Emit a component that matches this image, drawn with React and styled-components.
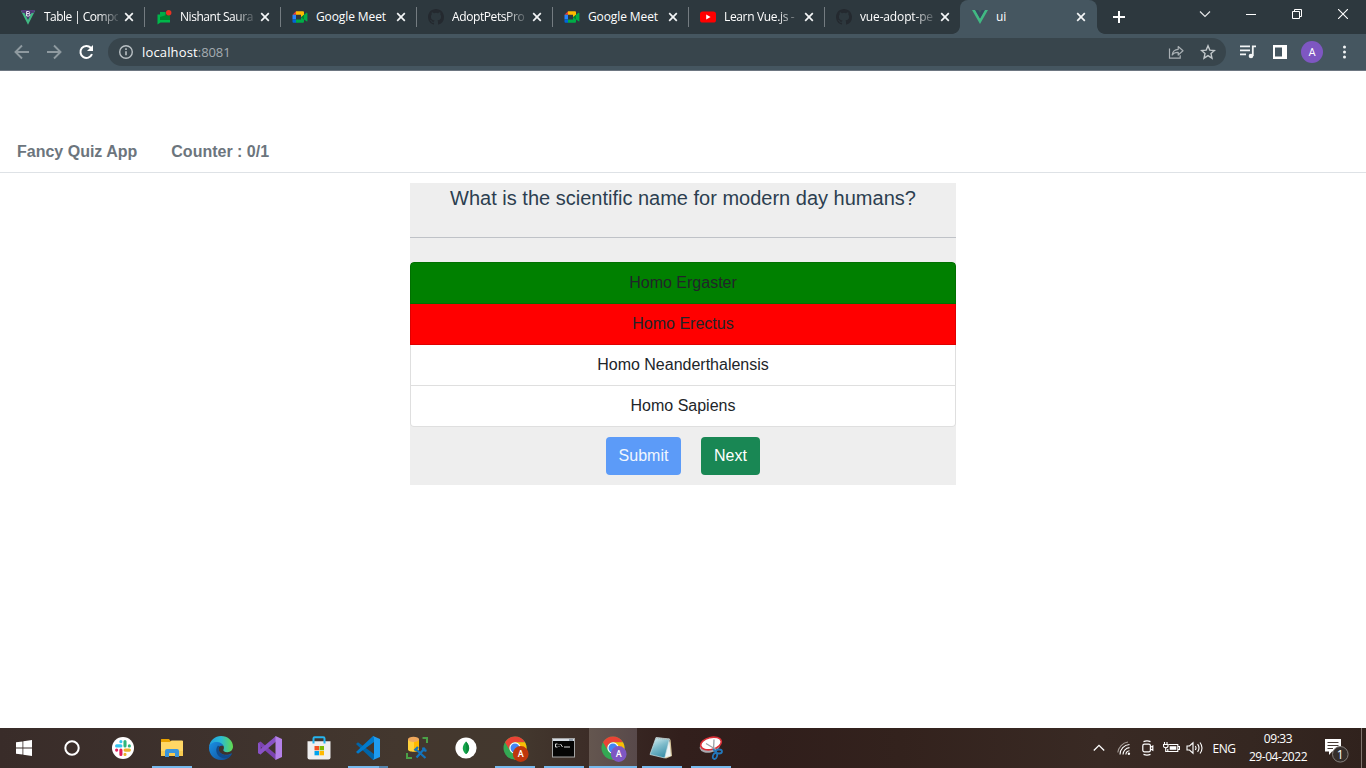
import React from 'react';
import styled, { createGlobalStyle, css } from 'styled-components';

const GlobalStyle = createGlobalStyle`
  *, *::before, *::after { box-sizing: border-box; }
  html, body { margin: 0; padding: 0; background: #fff; overflow: hidden; }
  svg { display: block; flex: none; }
`;

const uiFont = css`font-family: "Open Sans", "Noto Sans", sans-serif;`;

const Screen = styled.div`
  display: flex;
  flex-direction: column;
  width: 1366px;
  height: 768px;
  overflow: hidden;
`;

/* ---------- Browser chrome ---------- */

const TabStrip = styled.div`
  ${uiFont}
  display: flex;
  flex: none;
  height: 34px;
  padding-left: 8px;
  background: #2d383e;
`;

const Tab = styled.div`
  position: relative;
  display: flex;
  align-items: center;
  width: ${p => (p.$active ? 137 : 136)}px;
  height: 34px;
  padding-left: 12px;
  color: #fff;
  background: ${p => (p.$active ? '#455660' : 'transparent')};
  border-radius: 8px 8px 0 0;
  ${p => p.$divider && css`
    &::after {
      content: '';
      position: absolute;
      right: -1px;
      top: 7px;
      width: 1px;
      height: 20px;
      background: #747c81;
    }
  `}
  ${p => p.$active && css`
    &::before, &::after {
      content: '';
      position: absolute;
      bottom: 0;
      width: 8px;
      height: 8px;
    }
    &::before { left: -8px; background: radial-gradient(circle at 0 0, transparent 7.5px, #455660 8.2px); }
    &::after { right: -8px; background: radial-gradient(circle at 100% 0, transparent 7.5px, #455660 8.2px); }
  `}
`;

const TabTitle = styled.div`
  width: 74px;
  margin: 0 6px 0 8px;
  white-space: nowrap;
  font-size: 12px;
  line-height: 18px;
  font-weight: 500;
  letter-spacing: ${p => p.$spacing || 0}px;
  ${p => p.$fade && css`mask-image: linear-gradient(90deg, #000 72%, rgba(0, 0, 0, 0.15) 100%);`}
`;

const NewTab = styled.div`
  display: flex;
  align-items: center;
  width: 44px;
  padding-left: 16px;
`;

const WindowControls = styled.div`
  display: flex;
  margin-left: auto;
`;

const WindowButton = styled.div`
  display: flex;
  justify-content: center;
  align-items: center;
  width: 46px;
  height: 28px;
`;

const Toolbar = styled.div`
  ${uiFont}
  display: flex;
  flex: none;
  align-items: center;
  height: 37px;
  padding: 0 0 1px 12px;
  background: #455660;
  border-bottom: 1px solid #6d7681;
`;

const NavButton = styled.div`
  display: flex;
  flex: none;
  justify-content: center;
  width: 20px;
  margin-right: 12px;
`;

const Omnibox = styled.div`
  display: flex;
  flex: none;
  align-items: center;
  width: 1118px;
  height: 28px;
  padding: 0 10px;
  border-radius: 14px;
  background: #38454c;
`;

const Url = styled.div`
  flex: 1;
  margin-left: 8px;
  color: #fff;
  font-size: 13px;
  line-height: 20px;
  letter-spacing: 0.15px;
`;

const Port = styled.span`color: #a5acb1; letter-spacing: -0.1px;`;

const OmniActions = styled.div`display: flex; gap: 16px; align-items: center;`;

const ToolActions = styled.div`
  display: flex;
  flex: none;
  align-items: center;
  margin-left: 6px;
`;

const ToolSlot = styled.div`
  display: flex;
  flex: none;
  justify-content: center;
  width: 32px;
`;

const Avatar = styled.div`
  width: 22px;
  height: 22px;
  border-radius: 50%;
  background: #7e57c2;
  color: #fff;
  font: 11px/23px Roboto, sans-serif;
  text-align: center;
`;

/* ---------- Quiz page ---------- */

const Page = styled.main`
  flex: 1;
  padding-top: 60px;
  background: #fff;
  font-family: "Liberation Sans", Arial, sans-serif;
  font-size: 16px;
  line-height: 24px;
`;

const Nav = styled.nav`
  display: flex;
  gap: 34px;
  height: 42px;
  padding: 9px 17px 8px;
  border-bottom: 1px solid #dee2e6;
  color: #6c757d;
  font-weight: 700;
`;

const QuizCard = styled.section`
  width: 546px;
  height: 302px;
  margin: 10px auto 0;
  background: #eee;
  text-align: center;
`;

const Question = styled.h1`
  height: 55px;
  margin: 0 0 24px;
  padding-top: 3px;
  border-bottom: 1px solid #bfc2c7;
  color: #2c3e50;
  font-size: 20px;
  font-weight: 400;
  line-height: 24px;
`;

const Answers = styled.div`
  overflow: hidden;
  border-radius: 4px;
`;

const Answer = styled.div`
  padding: 8px 16px;
  color: #212529;
  background: ${p => p.$bg || '#fff'};
  border: 1px solid rgba(0, 0, 0, 0.125);
  border-top-width: 0;
  &:first-child { border-top-width: 1px; border-radius: 4px 4px 0 0; }
  &:last-child { border-radius: 0 0 4px 4px; }
`;

const Actions = styled.div`
  display: flex;
  justify-content: center;
  gap: 20px;
  padding-top: 10px;
`;

const Button = styled.button`
  width: ${p => p.$w}px;
  height: 38px;
  padding: 0;
  border: 0;
  border-radius: 4px;
  background: ${p => p.$bg};
  color: ${p => p.$color || '#fff'};
  font: 16px/24px "Liberation Sans", Arial, sans-serif;
`;

/* ---------- Taskbar ---------- */

const Taskbar = styled.div`
  ${uiFont}
  display: flex;
  flex: none;
  height: 40px;
  background: linear-gradient(90deg, #392c29 0, #3e322d 220px, #43372e 400px, #43382e 520px, #3b2b26 600px, #321f1c 680px, #301e1b 760px, #33221d 900px, #392a24 1100px, #352721 1250px, #30221d 1366px);
`;

const Slot = styled.div`
  position: relative;
  display: flex;
  flex: none;
  align-items: center;
  justify-content: center;
  width: ${p => p.$w || 49}px;
  height: 40px;
  padding: ${p => p.$pad || 0};
  ${p => p.$active && css`background: linear-gradient(90deg, #64564f, #58494a) 0 0 / 48px 100% no-repeat;`}
  ${p => p.$running && css`
    &::after {
      content: '';
      position: absolute;
      bottom: 0;
      left: ${p.$active ? 0 : 4}px;
      right: ${p.$active ? 1 : 5}px;
      height: 2px;
      background: ${p.$stacked ? 'linear-gradient(90deg, #76b9ed 31px, #5485ad 31px)' : '#76b9ed'};
    }
  `}
`;

const Apps = styled.div`display: flex; margin-left: 3px;`;

const Tray = styled.div`
  display: flex;
  margin-left: auto;
  align-items: center;
  color: #fff;
`;

const Lang = styled.div`
  width: 32px;
  padding-left: 2px;
  text-align: center;
  font-size: 12px;
  letter-spacing: -0.4px;
`;

const Clock = styled.div`
  width: 78px;
  text-align: center;
  font-size: 12px;
  line-height: 18px;
  letter-spacing: -0.45px;
`;

const DesktopEdge = styled.div`
  width: 5px;
  height: 40px;
  border-left: 1px solid #80756f;
`;

/* ---------- Icons ---------- */

const Svg = ({ w = 24, h, vb, children, ...rest }) => (
  <svg width={w} height={h || w} viewBox={vb || `0 0 ${w} ${h || w}`} fill="none" {...rest}>{children}</svg>
);

const CloseIcon = () => (
  <Svg w={10} stroke="#f4f6f7" strokeWidth="1.7"><path d="M1.2 1.2l7.6 7.6M8.8 1.2L1.2 8.8" /></Svg>
);

const VueIcon = () => (
  <Svg w={16}>
    <path d="M0 1h3.2L8 9.5 12.8 1H16L8 15z" fill="#41b883" />
    <path d="M3.2 1h3L8 4.1 9.8 1h3L8 9.5z" fill="#35495e" />
  </Svg>
);

const BootstrapVueIcon = () => (
  <Svg w={16}>
    <path d="M1 2h3l4 8 4-8h3L8 15.8z" fill="#41b883" />
    <path d="M.8 1h14.400l-1.500 3H2.300z" fill="#563d7c" />
    <path d="M3.500 2h9L8 11z" fill="#4b3670" />
    <path d="M6.600 2.500h1.900a1 1 0 010 2.100H6.600zM6.600 4.600h2.200a1.200 1.200 0 010 2.400H6.600z" stroke="#eee8f6" strokeWidth="1" />
  </Svg>
);

const ChatIcon = () => (
  <Svg w={16}>
    <path d="M4 3h5.500v3.200H14V11H4z" fill="#00832d" />
    <path d="M1.500 5.500H4V11h10v2.500H4.500l-3 2z" fill="#00b74a" />
    <path d="M4 3h5.500v3.200L4 8z" fill="#00ac47" />
    <circle cx="12.700" cy="3.700" r="2.700" fill="#ea3323" />
  </Svg>
);

const MeetIcon = () => (
  <Svg w={16}>
    <path d="M.5 5.8L4 2.3v3.5z" fill="#ea4335" />
    <path d="M.5 5.8H4v4.6H.5z" fill="#2684fc" />
    <path d="M.5 10.4H4v3.4H1.6a1.1 1.1 0 01-1.1-1.1z" fill="#0066da" />
    <path d="M4 2.3h7a1 1 0 011 1v3L9 8.4V5.8H4z" fill="#ffba00" />
    <path d="M4 10.4h5V7.9l3 2.4v2.5a1 1 0 01-1 1H4z" fill="#00ac47" />
    <path d="M9 8.2l5.5-4.4c.4-.3.9 0 .9.5v7.6c0 .5-.5.7-.9.4z" fill="#00ac47" />
    <path d="M9 8.2L12 5.8v4.7z" fill="#00832d" />
  </Svg>
);

const GithubIcon = () => (
  <Svg w={16} vb="0 0 16 16">
    <path fill="#24292f" d="M8 0C3.58 0 0 3.58 0 8c0 3.54 2.29 6.53 5.47 7.59.4.07.55-.17.55-.38 0-.19-.01-.82-.01-1.49-2.01.37-2.53-.49-2.69-.94-.09-.23-.48-.94-.82-1.13-.28-.15-.68-.52-.01-.53.63-.01 1.08.58 1.23.82.72 1.21 1.87.87 2.33.66.07-.52.28-.87.51-1.07-1.78-.2-3.64-.89-3.64-3.95 0-.87.31-1.59.82-2.15-.08-.2-.36-1.02.08-2.12 0 0 .67-.21 2.2.82a7.5 7.5 0 014 0c1.53-1.04 2.2-.82 2.2-.82.44 1.1.16 1.92.08 2.12.51.56.82 1.27.82 2.15 0 3.07-1.87 3.75-3.65 3.95.29.25.54.73.54 1.48 0 1.07-.01 1.93-.01 2.2 0 .21.15.46.55.38A8 8 0 0016 8c0-4.42-3.58-8-8-8z" />
  </Svg>
);

const YoutubeIcon = () => (
  <Svg w={16}><rect y="2.4" width="16" height="11.2" rx="2.7" fill="#f00" /><path d="M6.2 5.5v5L10.6 8z" fill="#fff" /></Svg>
);

const BackIcon = ({ flip }) => (
  <Svg w={16} stroke="#8f9aa0" strokeWidth="1.9"><path d={flip ? 'M1 8h13M8 1.5L14.5 8 8 14.5' : 'M15 8H2M8 1.5L1.5 8 8 14.5'} /></Svg>
);

const ReloadIcon = () => (
  <Svg w={16} stroke="#fff" strokeWidth="2"><path d="M14 10.2A6 6 0 1112.800 3.800L14 5" /><path d="M15 1v6H9z" fill="#fff" stroke="none" /></Svg>
);

const InfoIcon = () => (
  <Svg w={16} stroke="#b9c0c4" strokeWidth="1.4"><circle cx="8" cy="8" r="6.3" /><path d="M8 7.2v4M8 4.3v1.6" strokeWidth="1.6" /></Svg>
);

const ShareIcon = () => (
  <Svg w={16} stroke="#a9b0b4" strokeWidth="1.2">
    <path d="M1.5 4.5v9.7h10.7v-3" />
    <path d="M4.2 11c.5-4 2.8-5.6 6-5.7V2.5L15 6.8l-4.8 4.2V8.3C7.5 8.2 5.5 9 4.2 11z" strokeLinejoin="round" />
  </Svg>
);

const StarIcon = () => (
  <Svg w={16} stroke="#c2c8cb" strokeWidth="1.4"><path d="M8 1.8l1.8 4.3 4.7.4-3.5 3.1 1 4.6-4-2.5-4 2.5 1-4.6L1.5 6.5l4.700-.4z" /></Svg>
);

const MusicIcon = () => (
  <Svg w={16} stroke="#f3f5f6" strokeWidth="1.8">
    <path d="M0 2.4h10M0 6.4h10M0 10.4h6M12.8 12V2.4H16" />
    <circle cx="11" cy="12" r="2.3" fill="#f3f5f6" stroke="none" />
  </Svg>
);

const PanelIcon = () => (
  <Svg w={14}><path d="M0 0h14v14H0zM2 2.5v9h7v-9z" fill="#fff" fillRule="evenodd" /></Svg>
);

const DotsIcon = () => (
  <Svg w={4} h={14}><g fill="#f3f5f6"><circle cx="2.5" cy="2" r="1.5" /><circle cx="2.5" cy="7" r="1.5" /><circle cx="2.5" cy="12" r="1.5" /></g></Svg>
);

const WindowsIcon = () => (
  <Svg w={16}><path fill="#fff" d="M0 2.3L6.5 1.4v6.2H0zM7.3 1.3L16 0v7.6H7.3zM0 8.4h6.5v6.2L0 13.7zM7.3 8.4H16V16l-8.7-1.3z" /></Svg>
);

const SlackIcon = () => (
  <Svg w={22}>
    <circle cx="11" cy="11" r="11" fill="#fff" />
    <g strokeWidth="3.1" strokeLinecap="round">
      <path d="M4.600 8.900h4.300M8.900 4.600v.2" stroke="#36c5f0" />
      <path d="M13 4.600v4.300M17.300 8.900h.1" stroke="#2eb67d" />
      <path d="M13.100 13.100h4.300M13 17.300v.1" stroke="#ecb22e" />
      <path d="M8.900 13.100v4.300M4.600 13.100h.1" stroke="#e01e5a" />
    </g>
  </Svg>
);

const FolderIcon = () => (
  <Svg w={22} h={20}>
    <path d="M0 1.5Q0 1 .5 1h7.500l1.500 2H22v4H0z" fill="#e9a200" />
    <path d="M0 4h9l1.500-1.500H21q1 0 1 1V18H0z" fill="#ffd765" />
    <path d="M0 13h22v5H0z" fill="#f8cb50" />
    <path d="M4 19v-6q0-2 2-2h10q2 0 2 2v6h-4v-4H8v4z" fill="#3a96dd" />
  </Svg>
);

const EdgeIcon = () => (
  <Svg w={24}>
    <defs>
      <linearGradient id="edgeTop" x1="0" y1="8" x2="24" y2="8" gradientUnits="userSpaceOnUse"><stop stopColor="#229ee0" /><stop offset=".5" stopColor="#2abbd5" /><stop offset="1" stopColor="#63db4d" /></linearGradient>
      <linearGradient id="edgeLow" x1="2" y1="8" x2="18" y2="23" gradientUnits="userSpaceOnUse"><stop stopColor="#1989dc" /><stop offset="1" stopColor="#11529c" /></linearGradient>
    </defs>
    <path d="M0 11C1 4 6 0 12 0c7 0 12 5 12 10.500 0 3.500-2.500 5.700-5.700 5.700-3 0-4.500-1.300-3.900-2.400 1.300-2.200.4-5.800-3.900-6.300C5 6.900 1.500 8 0 11z" fill="url(#edgeTop)" />
    <path d="M0 12c0-4 4-6.500 8.600-6 3.300.3 5.300 2.300 5.700 4-5.500-1.500-6.300 4.500-2.400 7.200 3.400 2.400 7.400 1.800 10.100.2.700-.4 1.100.1.700.8C20.600 21.800 16.800 24 12 24 5.200 24 0 18.500 0 12z" fill="url(#edgeLow)" />
    <path d="M8.800 9.700C5.400 14 7.900 21 14.500 22.300c3.300.4 6.300-1.100 7.900-3.600-3.600 1.300-8 .8-10.900-1.700-2.300-2-2.500-5.100-.8-7z" fill="#114a8b" />
  </Svg>
);

const VisualStudioIcon = () => (
  <Svg w={24}>
    <path d="M0 7l2.500-1.500L18 18.500V24L3 11v4l-.5 3.500L0 17z" fill="#7b43b1" />
    <path d="M0 17l2.500 1.500L18 5.500V0L2 13.500V8L0 7z" fill="#8952c5" />
    <path d="M17.500 0L24 3v18l-6.500 3z" fill="#b481e8" />
  </Svg>
);

const StoreIcon = () => (
  <Svg w={24}>
    <path d="M.5 5.300h23v16.200q0 2-2 2h-19q-2 0-2-2z" fill="#efefef" />
    <path d="M6.500 7.500V2.500q0-1.200 1.200-1.200h8.600q1.200 0 1.200 1.200v5" stroke="#26b5ef" strokeWidth="2" />
    <path d="M7.500 10H12v4.300H7.500z" fill="#f25022" /><path d="M12.500 10H17v4.300h-4.500z" fill="#7fba00" />
    <path d="M7.500 15H12v4.300H7.500z" fill="#00a4ef" /><path d="M12.500 15H17v4.300h-4.500z" fill="#ffb900" />
  </Svg>
);

const CodeIcon = () => (
  <Svg w={24}>
    <path d="M0 8l2-1.800L18 18v5.500L17 24z" fill="#0065a9" />
    <path d="M0 16l2 1.800L18 6V.5L17 0z" fill="#007acc" />
    <path d="M17 0l7 3v18l-7 3 1-2V2z" fill="#1f9cf0" />
  </Svg>
);

const DatabaseIcon = () => (
  <Svg w={24}>
    <path d="M3 3.300v10.200c0 3 11 3 11 0V3.300z" fill="#ffd23c" />
    <path d="M9 5.500v10c3-.1 5-.8 5-2V3.300z" fill="#ffb900" />
    <ellipse cx="8.500" cy="3.300" rx="5.500" ry="2.600" fill="#efa75c" />
    <path d="M17.500 2H22v5M2 17v5h5" stroke="#4ba047" strokeWidth="2" />
    <path d="M10.500 13l10 9M20 12l-8.500 9.500" stroke="#1474bd" strokeWidth="2.200" />
    <path d="M9.500 14.500l3.500-3.500M18 11.500l.8 2.500 2.700.8" stroke="#1474bd" strokeWidth="2.400" />
  </Svg>
);

const MongoIcon = () => (
  <Svg w={22}>
    <circle cx="11" cy="11" r="10.600" fill="#fff" />
    <path d="M11 4.500c4.500 5 3.800 9 .3 12.500h-.6C7 13.500 6.500 9.500 11 4.500z" fill="#13a54b" />
    <path d="M11 4.500c4.500 5 3.800 9 .3 12.500z" fill="#0c8a3c" />
  </Svg>
);

const ChromeIcon = ({ badge }) => (
  <Svg w={26} h={26}>
    <circle cx="12" cy="12" r="11.500" fill="#34a853" />
    <path d="M12 .5a11.500 11.500 0 0110 5.800H12a5.700 5.700 0 00-5 8.500L2 6.300A11.500 11.500 0 0112 .5z" fill="#ea4335" />
    <path d="M12 6.300h10a11.500 11.500 0 01-10.600 17.200L17 14.800z" fill="#fbbc05" />
    <circle cx="12" cy="12" r="5.700" fill="#fff" /><circle cx="12" cy="12" r="4.500" fill="#4285f4" />
    <circle cx="17.700" cy="18" r="7.900" fill={badge} />
    <text x="17.700" y="21.200" textAnchor="middle" fill="#fff" fontFamily="Roboto, sans-serif" fontSize="9" fontWeight="500">A</text>
  </Svg>
);

const TerminalIcon = () => (
  <Svg w={24} h={20}>
    <rect x=".5" y=".5" width="22" height="18.500" fill="#050505" stroke="#a5a5a5" />
    <path d="M1 1h21v2H1z" fill="#d7dce3" /><path d="M17 2h4" stroke="#526477" />
    <path d="M5.500 6H3.500v3h2M7 6.300v.8M7 8.200v.8M8.500 6l2 3M12 9h6" stroke="#d9d9d9" />
  </Svg>
);

const NotepadIcon = () => (
  <Svg w={24}>
    <defs><linearGradient id="note" x1="5" y1="1" x2="15" y2="22" gradientUnits="userSpaceOnUse"><stop stopColor="#d8f0f3" /><stop offset=".45" stopColor="#7fbccb" /><stop offset="1" stopColor="#348ba6" /></linearGradient></defs>
    <path d="M21.500 3L23 20l-6 2.500-3-1z" fill="#d5c49b" />
    <path d="M20 2l1.800 18-6 1.500z" fill="#edf4f5" />
    <path d="M7 1.500L20.500 3l-4.800 19L1 18.500z" fill="url(#note)" stroke="#cbe4e8" strokeWidth=".7" />
    <path d="M7.300 2l13 1.500" stroke="#b3b8b5" strokeWidth="1.600" strokeDasharray="1 1" />
  </Svg>
);

const SnipIcon = () => (
  <Svg w={24}>
    <ellipse cx="11" cy="10" rx="10.500" ry="6.500" transform="rotate(-14 11 10)" fill="#a8a9af" />
    <ellipse cx="12" cy="7.500" rx="10.500" ry="6" transform="rotate(-14 12 7.500)" fill="#fff" stroke="#dc3038" strokeWidth="1.600" />
    <path d="M7 7.500l10 6M15 3.500L14.500 14" stroke="#9ba0a6" strokeWidth="1.300" />
    <g stroke="#2377ba" strokeWidth="1.800"><ellipse cx="20" cy="15.500" rx="3" ry="2" /><ellipse cx="16" cy="20" rx="2" ry="3" transform="rotate(20 16 20)" /><path d="M14 13l3.500 4" /></g>
  </Svg>
);

const WifiIcon = () => (
  <Svg w={16} stroke="#fff" strokeWidth="1.100">
    <path d="M4 14.500A10 10 0 0113.500 4.500M7 14.500A7 7 0 0113.500 7.600M9.900 14.500a4 4 0 013.600-3.800" />
    <path d="M1.800 12.500A12 12 0 0112 2" stroke="#a39a95" /><circle cx="12.900" cy="13.700" r="1.200" fill="#fff" stroke="none" />
  </Svg>
);

const MeetNowIcon = () => (
  <Svg w={14} h={16} stroke="#fff" strokeWidth="1.200">
    <rect x="1.800" y="4.100" width="7.600" height="7.800" rx="1.600" /><path d="M9.600 7.300l2.200-1.300v4.200L9.600 9M2.500 1.600q3.500-1.400 7 0M2.500 14.400q3.500 1.400 7 0" />
  </Svg>
);

const BatteryIcon = () => (
  <Svg w={17} h={14} stroke="#fff" strokeWidth="1.100">
    <path d="M5.500 3.500h9.300v7H4.800V8M15 5.500h1.500v3H15M2.700 6.500V10.500H5M1.500 1V3.500M4 1V3.500" /><path d="M.5 3.500h4.500V5Q5 6.700 2.700 6.700.5 6.700.5 5z" /><path d="M6.700 5.200h6.600v3.600H6.700z" fill="#fff" stroke="none" />
  </Svg>
);

const SpeakerIcon = () => (
  <Svg w={18} h={14} stroke="#fff" strokeWidth="1.100">
    <path d="M1 5v4h2.500L7 12.200V1.800L3.500 5zM9.300 5q1.400 2 0 4M11.600 3.200q2.800 3.800 0 7.600M14 1.500q4 5.500 0 11" />
  </Svg>
);

const NotificationIcon = () => (
  <Svg w={26} h={26}>
    <path d="M1 2h16v12.500H8L5 18v-3.500H1z" fill="#fff" />
    <path d="M3.500 5.500h11M3.500 8.500h11M3.500 11.500H9" stroke="#493d38" strokeWidth="1" />
    <circle cx="16.300" cy="17.300" r="7.800" fill="#352e2b" stroke="#85807d" />
    <text x="16.300" y="21.500" textAnchor="middle" fill="#fff" fontFamily="Open Sans, sans-serif" fontSize="12">1</text>
  </Svg>
);

const tabs = [
  { title: 'Table | Compo', icon: <BootstrapVueIcon />, fade: true, spacing: -0.55 },
  { title: 'Nishant Saura', icon: <ChatIcon />, fade: true, spacing: -0.45 },
  { title: 'Google Meet', icon: <MeetIcon />, spacing: -0.1 },
  { title: 'AdoptPetsPro', icon: <GithubIcon />, fade: true, spacing: -0.4 },
  { title: 'Google Meet', icon: <MeetIcon />, spacing: -0.1 },
  { title: 'Learn Vue.js -', icon: <YoutubeIcon />, fade: true, spacing: -0.35 },
  { title: 'vue-adopt-pe', icon: <GithubIcon />, fade: true, spacing: -0.15 },
  { title: 'ui', icon: <VueIcon />, active: true },
];

const answers = [
  { text: 'Homo Ergaster', bg: 'green' },
  { text: 'Homo Erectus', bg: 'red' },
  { text: 'Homo Neanderthalensis' },
  { text: 'Homo Sapiens' },
];

const apps = [
  { icon: <SlackIcon /> },
  { icon: <FolderIcon /> , running: true },
  { icon: <EdgeIcon /> },
  { icon: <VisualStudioIcon /> },
  { icon: <StoreIcon />, pad: '0 2px 0 0' },
  { icon: <CodeIcon />, running: true, stacked: true },
  { icon: <DatabaseIcon /> },
  { icon: <MongoIcon /> },
  { icon: <ChromeIcon badge="#bf360c" />, running: true, pad: '2px 0 0 1px' },
  { icon: <TerminalIcon />, running: true },
  { icon: <ChromeIcon badge="#7e57c2" />, running: true, active: true, pad: '2px 0 0 1px' },
  { icon: <NotepadIcon />, running: true, pad: '0 3px 0 0' },
  { icon: <SnipIcon />, running: true },
];

export default function App() {
  return (
    <Screen>
      <GlobalStyle />
      <TabStrip>
        {tabs.map((t, i) => (
          <Tab key={i} $active={t.active} $divider={i < 6}>
            {t.icon}
            <TabTitle $fade={t.fade} $spacing={t.spacing}>{t.title}</TabTitle>
            <CloseIcon />
          </Tab>
        ))}
        <NewTab><Svg w={12} stroke="#fff" strokeWidth="2"><path d="M6 0v12M0 6h12" /></Svg></NewTab>
        <WindowControls>
          <WindowButton><Svg w={12} stroke="#e4e6e7" strokeWidth="1.200"><path d="M1 3.500l5 5 5-5" /></Svg></WindowButton>
          <WindowButton><Svg w={10} stroke="#fff"><path d="M0 5.500h10" /></Svg></WindowButton>
          <WindowButton><Svg w={10} stroke="#fff"><path d="M.5 2.500h7v7h-7zM2.500 2.500v-2h7v7h-2" /></Svg></WindowButton>
          <WindowButton><Svg w={10} stroke="#fff" strokeWidth="1.100"><path d="M0 0l10 10M10 0L0 10" /></Svg></WindowButton>
        </WindowControls>
      </TabStrip>
      <Toolbar>
        <NavButton><BackIcon /></NavButton>
        <NavButton><BackIcon flip /></NavButton>
        <NavButton><ReloadIcon /></NavButton>
        <Omnibox>
          <InfoIcon />
          <Url>localhost<Port>:8081</Port></Url>
          <OmniActions><ShareIcon /><StarIcon /></OmniActions>
        </Omnibox>
        <ToolActions>
          <ToolSlot><MusicIcon /></ToolSlot>
          <ToolSlot><PanelIcon /></ToolSlot>
          <ToolSlot><Avatar>A</Avatar></ToolSlot>
          <ToolSlot><DotsIcon /></ToolSlot>
        </ToolActions>
      </Toolbar>

      <Page>
        <Nav><span>Fancy Quiz App</span><span>Counter : 0/1</span></Nav>
        <QuizCard>
          <Question>What is the scientific name for modern day humans?</Question>
          <Answers>
            {answers.map(a => <Answer key={a.text} $bg={a.bg}>{a.text}</Answer>)}
          </Answers>
          <Actions>
            <Button $w={75} $bg="#5c9bf8" $color="#f1f6fe">Submit</Button>
            <Button $w={59} $bg="#198754">Next</Button>
          </Actions>
        </QuizCard>
      </Page>

      <Taskbar>
        <Slot $w={48}><WindowsIcon /></Slot>
        <Slot $w={48}><Svg w={16} stroke="#fff" strokeWidth="2"><circle cx="8" cy="8" r="6.700" /></Svg></Slot>
        <Apps>
          {apps.map((a, i) => (
            <Slot key={i} $running={a.running} $active={a.active} $stacked={a.stacked} $pad={a.pad || '0 1px 0 0'}>{a.icon}</Slot>
          ))}
        </Apps>
        <Tray>
          <Slot $w={24}><Svg w={12} stroke="#fff" strokeWidth="1.300"><path d="M.8 8.500L6 3.300l5.200 5.200" /></Svg></Slot>
          <Slot $w={24} $pad="0 0 0 1px"><WifiIcon /></Slot>
          <Slot $w={24} $pad="0 0 0 2px"><MeetNowIcon /></Slot>
          <Slot $w={24}><BatteryIcon /></Slot>
          <Slot $w={24}><SpeakerIcon /></Slot>
          <Lang>ENG</Lang>
          <Clock>09:33<br />29-04-2022</Clock>
          <Slot $w={44} $pad="4px 4px 0 0"><NotificationIcon /></Slot>
          <DesktopEdge />
        </Tray>
      </Taskbar>
    </Screen>
  );
}
